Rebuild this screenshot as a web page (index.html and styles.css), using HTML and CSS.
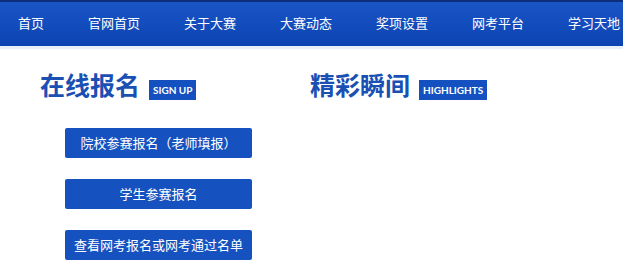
FILE: index.html
```html
<!DOCTYPE html>
<html lang="zh-CN">
<head>
  <meta charset="UTF-8">
  <title>在线报名</title>
  <link rel="stylesheet" href="styles.css">
</head>
<body>
<!-- 顶部导航 -->
<div class="nav">
  <ul>
    <li><a href="#">首页</a></li>
    <li><a href="#">官网首页</a></li>
    <li><a href="#">关于大赛</a></li>
    <li><a href="#">大赛动态</a></li>
    <li><a href="#">奖项设置</a></li>
    <li><a href="#">网考平台</a></li>
    <li><a href="#">学习天地</a></li>
  </ul>
</div>

<div class="main">
  <!-- 在线报名 -->
  <div class="col signup">
    <div class="title">
      <h2>在线报名</h2>
      <span class="tag">SIGN UP</span>
    </div>
    <div class="btns">
      <a class="btn" href="#">院校参赛报名（老师填报）</a>
      <a class="btn" href="#">学生参赛报名</a>
      <a class="btn" href="#">查看网考报名或网考通过名单</a>
    </div>
  </div>
  <!-- 精彩瞬间 -->
  <div class="col highlights">
    <div class="title">
      <h2>精彩瞬间</h2>
      <span class="tag">HIGHLIGHTS</span>
    </div>
  </div>
</div>
</body>
</html>
```

FILE: styles.css
```css
* {
  padding: 0;
  margin: 0;
  list-style: none;
  border: 0;
}

body {
  font-family: "Microsoft YaHei", "Noto Sans CJK SC", sans-serif;
  background: #fff;
  width: 623px;
  overflow: hidden;
}

a {
  text-decoration: none;
}

.nav {
  height: 44px;
  border-top: 2px solid #0b2f7a;
  background: linear-gradient(#1a55c6, #0c43b2);
  border-bottom: 3px solid #e9eff8;
}

.nav ul {
  display: flex;
  gap: 44px;
  padding-left: 18px;
}

.nav li a {
  display: block;
  line-height: 42px;
  font-size: 13px;
  color: #fff;
  white-space: nowrap;
}

.main {
  display: flex;
  padding: 17px 0 0 40px;
}

.col.signup {
  width: 270px;
}

.title {
  display: flex;
  align-items: flex-end;
  gap: 9px;
  height: 36px;
}

.title h2 {
  font-size: 25px;
  line-height: 36px;
  font-weight: bold;
  color: #1a4fb3;
}

.tag {
  height: 20px;
  line-height: 20px;
  padding: 0 4px;
  margin-bottom: 2px;
  background: #1450c0;
  color: #fff;
  font-family: Lato, "Open Sans", sans-serif;
  font-size: 10px;
  font-weight: bold;
}

.btns {
  display: flex;
  flex-direction: column;
  gap: 21px;
  padding: 26px 0 0 25px;
}

.btn {
  display: block;
  width: 187px;
  height: 30px;
  line-height: 30px;
  text-align: center;
  background: #1552bf;
  border-radius: 2px;
  color: #fff;
  font-size: 13px;
}
```
